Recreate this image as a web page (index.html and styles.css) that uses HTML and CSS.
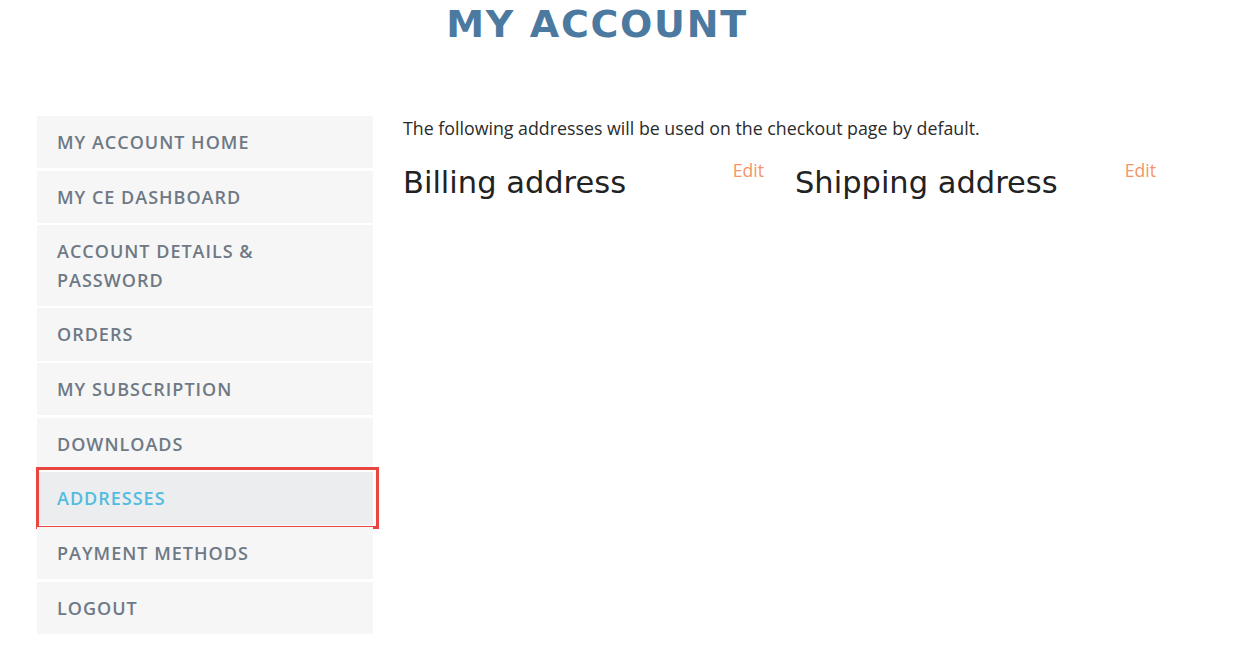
FILE: index.html
```html
<!DOCTYPE html>
<html lang="en">
<head>
    <meta charset="UTF-8">
    <meta name="viewport" content="width=device-width, initial-scale=1.0">
    <title>My Account</title>
    <link rel="stylesheet" href="styles.css">
</head>
<body>

    <div class="page">
        <h1 class="page-title">MY ACCOUNT</h1>

        <div class="account">
            <nav class="account-nav">
                <a class="nav-item" href="#">MY ACCOUNT HOME</a>
                <a class="nav-item" href="#">MY CE DASHBOARD</a>
                <a class="nav-item" href="#">ACCOUNT DETAILS &amp;<br>PASSWORD</a>
                <a class="nav-item" href="#">ORDERS</a>
                <a class="nav-item" href="#">MY SUBSCRIPTION</a>
                <a class="nav-item" href="#">DOWNLOADS</a>
                <a class="nav-item active" href="#">ADDRESSES<span class="highlight"></span></a>
                <a class="nav-item" href="#">PAYMENT METHODS</a>
                <a class="nav-item" href="#">LOGOUT</a>
            </nav>

            <div class="account-content">
                <p class="intro">The following addresses will be used on the checkout page by default.</p>

                <div class="addresses">
                    <div class="address">
                        <header class="address-title">
                            <h3>Billing address</h3>
                            <a class="edit" href="#">Edit</a>
                        </header>
                    </div>
                    <div class="address">
                        <header class="address-title">
                            <h3>Shipping address</h3>
                            <a class="edit" href="#">Edit</a>
                        </header>
                    </div>
                </div>
            </div>
        </div>
    </div>

</body>
</html>
```

FILE: styles.css
```css
* {
    margin: 0;
    padding: 0;
    box-sizing: border-box;
}

body {
    background: #fff;
    font-family: "Open Sans", "Liberation Sans", sans-serif;
    color: #2b2b2b;
}

.page {
    width: 1120px;
    margin-left: 37px;
}

.page-title {
    text-align: center;
    font-family: "DejaVu Sans", sans-serif;
    font-weight: bold;
    font-size: 38px;
    line-height: 46px;
    letter-spacing: 1.7px;
    color: #4b79a0;
    padding-top: 1px;
    margin-bottom: 69px;
}

.account {
    display: flex;
    gap: 30px;
}

/* Sidebar menu */
.account-nav {
    width: 336px;
    flex-shrink: 0;
    display: flex;
    flex-direction: column;
    gap: 2.5px;
}

.nav-item {
    position: relative;
    display: block;
    background: #f6f6f6;
    padding: 12px 20px;
    font-size: 18px;
    line-height: 28.2px;
    font-weight: 600;
    letter-spacing: 1px;
    color: #6e7985;
    text-decoration: none;
}

.nav-item.active {
    background: #ecedef;
    color: #52bce0;
}

/* red annotation box round the active item */
.highlight {
    position: absolute;
    top: -5px;
    left: -1px;
    right: -6px;
    bottom: -4px;
    border: 3px solid #e8463f;
}

/* Content */
.account-content {
    flex: 1;
}

.intro {
    font-size: 17.8px;
    line-height: 24px;
    margin-bottom: 25px;
}

.addresses {
    display: flex;
    gap: 30px;
}

.address {
    flex: 1;
}

.address-title {
    display: flex;
    justify-content: space-between;
    align-items: flex-start;
}

.address-title h3 {
    font-family: "DejaVu Sans", sans-serif;
    font-weight: normal;
    font-size: 30.5px;
    line-height: 36px;
    color: #222;
}

.edit {
    font-size: 17.6px;
    line-height: 18px;
    margin-top: -4px;
    margin-right: 1px;
    color: #f39468;
    text-decoration: none;
}
```
